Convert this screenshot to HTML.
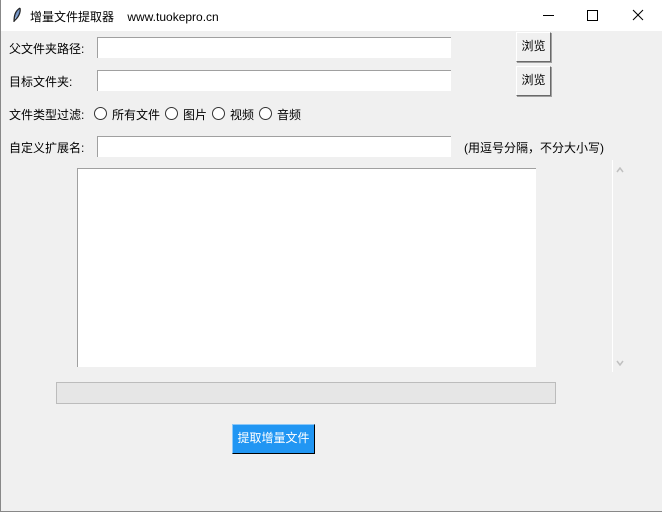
<!DOCTYPE html><html><head><meta charset="utf-8"><style>
body{margin:0;width:662px;height:512px;overflow:hidden;background:#f0f0f0;font-family:"Liberation Sans","Noto Sans CJK SC",sans-serif;font-size:12px;color:#000;position:relative}
.a{position:absolute}
.e{position:absolute;background:#fff;border-top:1px solid #a0a0a0;border-left:1px solid #a0a0a0;box-sizing:border-box}
.b{position:absolute;width:35px;height:30px;background:#f0f0f0;border:1px solid;border-color:#fff #696969 #696969 #fff;box-sizing:border-box;text-align:center;line-height:27px;box-shadow:1px 1px 0 #a0a0a0}
.r{position:absolute;top:107px;width:11px;height:11px;border:1px solid #333;border-radius:50%;background:#fff}
</style></head><body>
<div class="a" style="left:0;top:0;width:662px;height:31px;background:#fff"></div>
<div class="a" style="left:0;top:0;width:661px;height:511px;border:1px solid #888;border-top:none"></div>
<svg class="a" style="left:12px;top:7px" width="10" height="16"><path d="M8 1 C3 4 2 9 2 15 M8 1 C9 6 6 11 2 14" stroke="#222" fill="#6a8cc0" stroke-width="1.2"/></svg>
<div class="a" style="left:30px;top:8px;font-size:12px">增量文件提取器 &nbsp;&nbsp; www.tuokepro.cn</div>
<div class="a" style="left:543px;top:15px;width:11px;height:1px;background:#000"></div>
<div class="a" style="left:587px;top:10px;width:9px;height:9px;border:1px solid #000"></div>
<svg class="a" style="left:632px;top:9px" width="12" height="12"><path d="M1 1L11 11M11 1L1 11" stroke="#000"/></svg>
<div class="a" style="left:9px;top:40px">父文件夹路径:</div>
<div class="e" style="left:97px;top:37px;width:354px;height:21px"></div>
<div class="b" style="left:516px;top:32px">浏览</div>
<div class="a" style="left:9px;top:73px">目标文件夹:</div>
<div class="e" style="left:97px;top:70px;width:354px;height:21px"></div>
<div class="b" style="left:516px;top:66px">浏览</div>
<div class="a" style="left:9px;top:106px">文件类型过滤:</div>
<span class="r" style="left:94px"></span><div class="a" style="left:112px;top:106px">所有文件</div>
<span class="r" style="left:165px"></span><div class="a" style="left:183px;top:106px">图片</div>
<span class="r" style="left:212px"></span><div class="a" style="left:230px;top:106px">视频</div>
<span class="r" style="left:259px"></span><div class="a" style="left:277px;top:106px">音频</div>
<div class="a" style="left:9px;top:139px">自定义扩展名:</div>
<div class="e" style="left:97px;top:136px;width:354px;height:21px"></div>
<div class="a" style="left:464px;top:139px">(用逗号分隔，不分大小写)</div>
<div class="e" style="left:77px;top:168px;width:459px;height:199px"></div>
<div class="a" style="left:612px;top:160px;width:1px;height:212px;background:#fff"></div>
<svg class="a" style="left:616px;top:167px" width="8" height="6"><path d="M1 5L4 1L7 5" stroke="#c0c0c0" fill="none" stroke-width="1.5"/></svg>
<svg class="a" style="left:616px;top:360px" width="8" height="6"><path d="M1 1L4 5L7 1" stroke="#c0c0c0" fill="none" stroke-width="1.5"/></svg>
<div class="a" style="left:56px;top:382px;width:500px;height:22px;background:#e6e6e6;border:1px solid #bcbcbc;box-sizing:border-box"></div>
<div class="a" style="left:232px;top:424px;width:83px;height:30px;background:#2196f3;border-right:1px solid #000;border-bottom:1px solid #000;border-top:1px solid #8cc8f8;border-left:1px solid #8cc8f8;box-sizing:border-box;color:#fff;text-align:center;line-height:27px">提取增量文件</div>
</body></html>
